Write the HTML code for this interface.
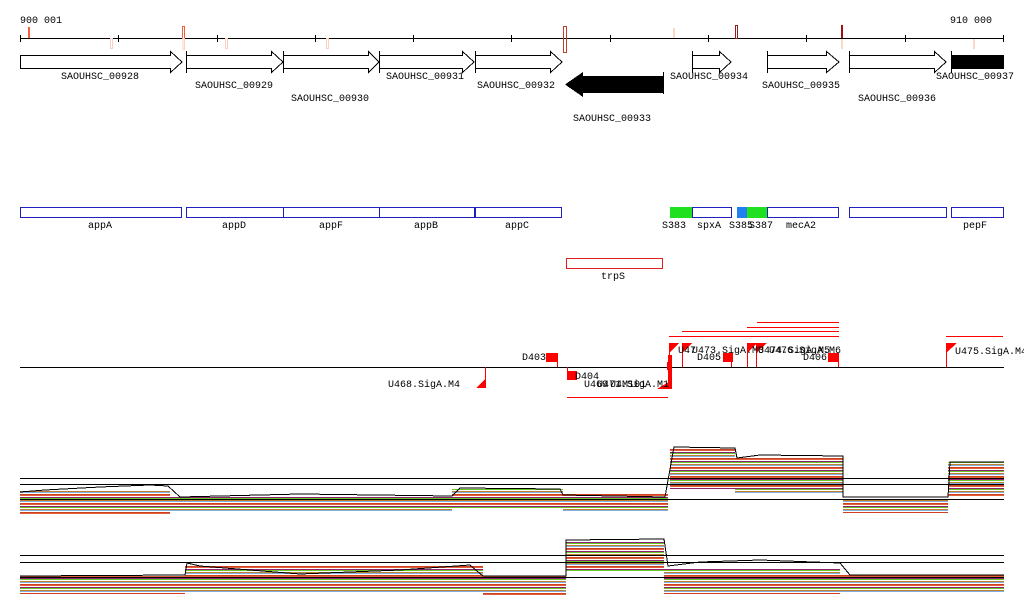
<!DOCTYPE html>
<html><head><meta charset="utf-8"><style>
html,body{margin:0;padding:0;background:#fff;width:1024px;height:611px;overflow:hidden}
svg{display:block}
text{font-family:"Liberation Mono","DejaVu Sans Mono",monospace;font-size:10px;fill:#000}
</style></head><body>
<svg width="1024" height="611" viewBox="0 0 1024 611" xmlns="http://www.w3.org/2000/svg" shape-rendering="crispEdges">
<defs>
<pattern id="bands" patternUnits="userSpaceOnUse" width="8" height="9">
<rect width="8" height="9" fill="#fff"/>
<rect y="0" width="8" height="1" fill="#e0603a"/>
<rect y="2" width="8" height="1" fill="#8a2070"/>
<rect y="3" width="8" height="1" fill="#68c828"/>
<rect y="5" width="8" height="1" fill="#c08030"/>
<rect y="6" width="8" height="1" fill="#80b0e0"/>
<rect y="8" width="8" height="1" fill="#d04020"/>
</pattern>
</defs>
<!-- ruler -->
<text x="20" y="23">900 001</text>
<text x="950" y="23">910 000</text>
<line x1="20" y1="38.5" x2="1004" y2="38.5" stroke="#000"/>
<g stroke="#000">
<line x1="20.5" y1="35" x2="20.5" y2="42"/><line x1="118.5" y1="35" x2="118.5" y2="42"/><line x1="217.5" y1="35" x2="217.5" y2="42"/><line x1="315.5" y1="35" x2="315.5" y2="42"/><line x1="413.5" y1="35" x2="413.5" y2="42"/><line x1="511.5" y1="35" x2="511.5" y2="42"/><line x1="610.5" y1="35" x2="610.5" y2="42"/><line x1="708.5" y1="35" x2="708.5" y2="42"/><line x1="806.5" y1="35" x2="806.5" y2="42"/><line x1="905.5" y1="35" x2="905.5" y2="42"/><line x1="1003.5" y1="35" x2="1003.5" y2="42"/>
</g>
<rect x="28" y="27" width="2" height="11" fill="#f06040"/>
<rect x="110.5" y="38.5" width="2" height="10" fill="none" stroke="#fcd0c0"/>
<rect x="182.5" y="26.5" width="2" height="12" fill="none" stroke="#f06040"/>
<rect x="183" y="38.5" width="1.5" height="11" fill="none" stroke="#fcd0c0"/>
<rect x="225.5" y="38.5" width="2" height="10" fill="none" stroke="#fcd0c0"/>
<rect x="326.5" y="38.5" width="2" height="10" fill="none" stroke="#fcd0c0"/>
<rect x="563.5" y="26.5" width="3" height="26" fill="none" stroke="#c04030"/>
<rect x="673" y="28" width="2" height="10" fill="#fcd8c8"/>
<rect x="735.5" y="25.5" width="2" height="13" fill="none" stroke="#902020"/>
<rect x="841" y="25" width="2" height="13" fill="#a01010"/>
<rect x="841" y="39" width="2" height="10" fill="#fcd8c8"/>
<rect x="973" y="39" width="2" height="10" fill="#fcd8c8"/>
<!-- genes -->
<g fill="#fff" stroke="#000" stroke-width="1">
<path d="M20.5 55.5H170.5V51.5L182 62L170.5 72.5V68.5H20.5Z"/>
<path d="M186.5 55.5H271.5V51.5L283 62L271.5 72.5V68.5H186.5Z"/>
<path d="M283.5 55.5H368.5V51.5L379 62L368.5 72.5V68.5H283.5Z"/>
<path d="M379.5 55.5H462.5V51.5L474 62L462.5 72.5V68.5H379.5Z"/>
<path d="M475.5 55.5H550.5V51.5L562 62L550.5 72.5V68.5H475.5Z"/>
<path d="M692.5 55.5H719.5V51.5L731 62L719.5 72.5V68.5H692.5Z"/>
<path d="M767.5 55.5H826.5V51.5L839 62L826.5 72.5V68.5H767.5Z"/>
<path d="M849.5 55.5H934.5V51.5L946 62L934.5 72.5V68.5H849.5Z"/>
</g>
<g stroke="#000"><line x1="186.5" y1="51" x2="186.5" y2="73"/><line x1="283.5" y1="51" x2="283.5" y2="73"/><line x1="379.5" y1="51" x2="379.5" y2="73"/><line x1="475.5" y1="51" x2="475.5" y2="73"/><line x1="692.5" y1="51" x2="692.5" y2="73"/><line x1="767.5" y1="51" x2="767.5" y2="73"/><line x1="849.5" y1="51" x2="849.5" y2="73"/><line x1="951.5" y1="51" x2="951.5" y2="73"/><line x1="663.5" y1="72" x2="663.5" y2="94"/></g>
<path d="M663 76V93H583V97L565 84.5L583 72V76Z" fill="#000"/>
<rect x="951" y="55" width="53" height="14" fill="#000"/>
<text x="61" y="79">SAOUHSC_00928</text>
<text x="195" y="88">SAOUHSC_00929</text>
<text x="291" y="101">SAOUHSC_00930</text>
<text x="386" y="79">SAOUHSC_00931</text>
<text x="477" y="88">SAOUHSC_00932</text>
<text x="573" y="121">SAOUHSC_00933</text>
<text x="670" y="79">SAOUHSC_00934</text>
<text x="762" y="88">SAOUHSC_00935</text>
<text x="858" y="101">SAOUHSC_00936</text>
<text x="936" y="79">SAOUHSC_00937</text>
<!-- features -->
<g fill="#fff" stroke="#2020c0">
<rect x="20.5" y="207.5" width="161" height="10"/>
<rect x="186.5" y="207.5" width="97" height="10"/>
<rect x="283.5" y="207.5" width="96" height="10"/>
<rect x="379.5" y="207.5" width="95" height="10"/>
<rect x="475.5" y="207.5" width="86" height="10"/>
<rect x="692.5" y="207.5" width="39" height="10"/>
<rect x="767.5" y="207.5" width="71" height="10"/>
<rect x="849.5" y="207.5" width="97" height="10"/>
<rect x="951.5" y="207.5" width="52" height="10"/>
</g>
<rect x="670" y="207" width="22" height="11" fill="#20e020"/>
<rect x="737" y="207" width="10" height="11" fill="#2080f0"/>
<rect x="747" y="207" width="20" height="11" fill="#20e020"/>
<text x="88" y="228">appA</text><text x="222" y="228">appD</text><text x="319" y="228">appF</text><text x="414" y="228">appB</text><text x="505" y="228">appC</text>
<text x="662" y="228">S383</text><text x="697" y="228">spxA</text><text x="729" y="228">S385</text><text x="749" y="228">S387</text><text x="786" y="228">mecA2</text><text x="963" y="228">pepF</text>
<rect x="566.5" y="258.5" width="96" height="10" fill="#fff" stroke="#e02020"/>
<text x="601" y="279">trpS</text>
<!-- transcription -->
<line x1="20" y1="367.5" x2="1004" y2="367.5" stroke="#000"/>
<g fill="#f00" stroke="none">
<rect x="757" y="322" width="82" height="1"/><rect x="747" y="327" width="92" height="1"/><rect x="682" y="331" width="157" height="1"/><rect x="669" y="336" width="170" height="1"/>
<rect x="946" y="336" width="57" height="1"/><rect x="567" y="397" width="101" height="1"/>
<rect x="546" y="353" width="12" height="9"/><rect x="557" y="353" width="1" height="14"/>
<rect x="567" y="367" width="1" height="7"/><rect x="567" y="371" width="10" height="9"/>
<rect x="485" y="367" width="1" height="21"/><path d="M476 388L486 378V388Z"/>
<path d="M657 389L672 380V389Z"/><rect x="667" y="362" width="1" height="8"/><rect x="668" y="355" width="4" height="34"/>
<rect x="669" y="343" width="1" height="24"/><path d="M669 343H679L669 353Z"/>
<rect x="682" y="343" width="1" height="24"/><path d="M682 343H692L682 353Z"/>
<rect x="723" y="353" width="10" height="9"/><rect x="731" y="353" width="1" height="14"/>
<rect x="747" y="343" width="1" height="24"/><path d="M747 343H757L747 353Z"/>
<rect x="756" y="343" width="1" height="24"/><path d="M756 343H767L756 353Z"/>
<rect x="828" y="353" width="10" height="9"/><rect x="838" y="353" width="1" height="14"/>
<rect x="946" y="343" width="1" height="24"/><path d="M946 343H957L946 353Z"/>
</g>
<text x="522" y="360">D403</text>
<text x="575" y="379">D404</text>
<text x="388" y="387">U468.SigA.M4</text>
<text x="584" y="387">U469</text><text x="597" y="387">U471.SigA.M1</text><text x="610" y="387">U4M101</text>
<text x="678" y="353">U47</text><text x="692" y="353">U473.SigA.M3</text><text x="697" y="360">D405</text>
<text x="758" y="353">U474.SigA.M5</text><text x="769" y="353">U476.SigA.M6</text><text x="803" y="360">D406</text>
<text x="955" y="354">U475.SigA.M4</text>
<!-- plot 1 -->
<g fill="url(#bands)">
<rect x="20" y="490" width="150" height="25"/>
<rect x="170" y="497" width="282" height="15"/>
<rect x="452" y="489" width="111" height="19"/>
<rect x="563" y="494" width="105" height="18"/>
<rect x="670" y="449" width="65" height="40"/>
<rect x="735" y="458" width="108" height="36"/>
<rect x="843" y="499" width="105" height="14"/>
<rect x="948" y="462" width="56" height="34"/>
</g>
<g fill="none" stroke="#000">
<line x1="20" y1="478.5" x2="1004" y2="478.5"/><line x1="20" y1="484.5" x2="1004" y2="484.5"/><line x1="20" y1="499.5" x2="1004" y2="499.5"/>
<path d="M20 492L45 490L100 487L150 485L168 486L180 497L300 494L452 496L460 488L560 489L563 495L665 497L674 447L735 448L737 458L760 455L843 456L843 497L948 497L950 462L1004 462"/>
</g>
<!-- plot 2 -->
<g fill="url(#bands)">
<rect x="20" y="576" width="165" height="18"/>
<rect x="185" y="566" width="298" height="26"/>
<rect x="483" y="576" width="83" height="19"/>
<rect x="566" y="541" width="98" height="30"/>
<rect x="664" y="568" width="176" height="26"/>
<rect x="840" y="575" width="164" height="17"/>
</g>
<g fill="none" stroke="#000">
<line x1="20" y1="555.5" x2="1004" y2="555.5"/><line x1="20" y1="562.5" x2="1004" y2="562.5"/><line x1="20" y1="577.5" x2="1004" y2="577.5"/>
<path d="M20 576L185 575L187 563L200 566L300 574L400 570L470 565L483 576L566 576L566 540L664 539L668 566L700 562L760 560L840 563L850 575L1004 575"/>
</g>
</svg>
</body></html>
